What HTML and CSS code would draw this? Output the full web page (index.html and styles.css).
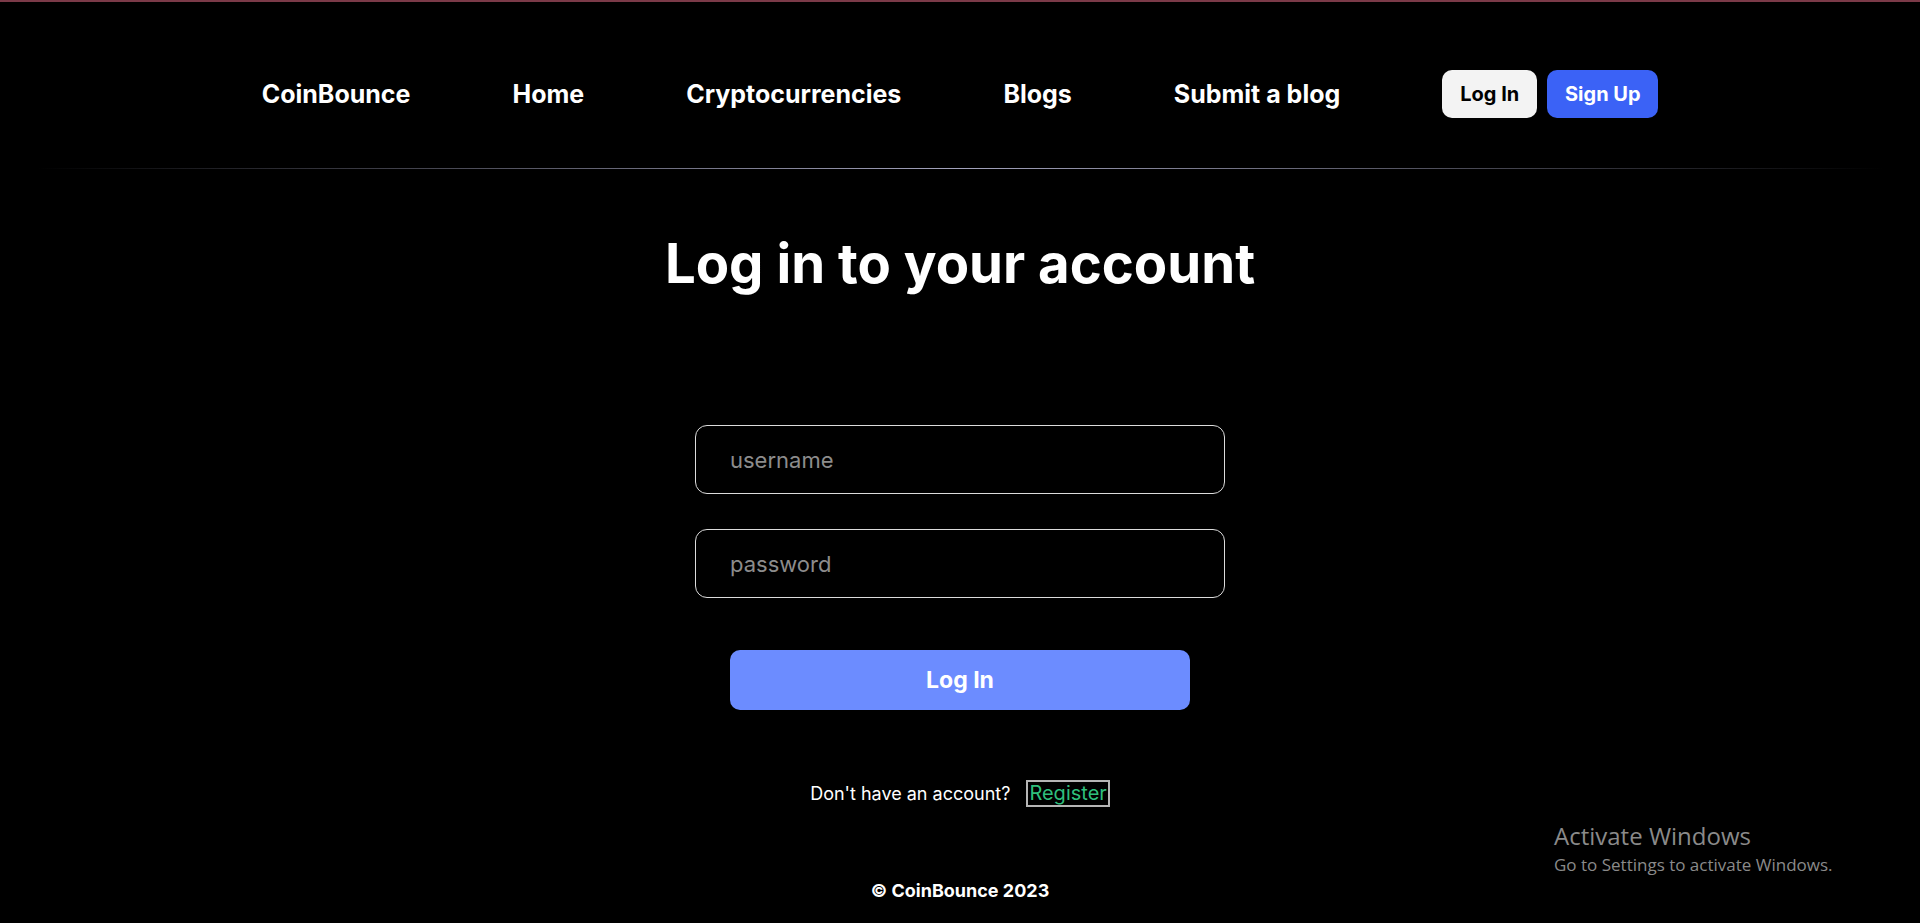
FILE: index.html
```html
<!DOCTYPE html>
<html lang="en">
<head>
<meta charset="utf-8">
<title>CoinBounce</title>
<link rel="stylesheet" href="styles.css">
</head>
<body>
<div class="topbar"></div>
<header class="header">
  <nav class="nav">
    <a class="nav-link" href="#">CoinBounce</a>
    <a class="nav-link" href="#">Home</a>
    <a class="nav-link" href="#">Cryptocurrencies</a>
    <a class="nav-link" href="#">Blogs</a>
    <a class="nav-link" href="#">Submit a blog</a>
    <div class="auth">
      <button class="btn btn-login">Log In</button>
      <button class="btn btn-signup">Sign Up</button>
    </div>
  </nav>
</header>
<div class="separator"></div>
<main class="main">
  <h1 class="title">Log in to your account</h1>
  <form class="form">
    <input class="field" type="text" placeholder="username">
    <input class="field" type="password" placeholder="password">
    <button class="submit" type="button">Log In</button>
  </form>
  <div class="register-row">
    <span>Don't have an account?</span>
    <button class="register" type="button">Register</button>
  </div>
</main>
<footer class="footer">© CoinBounce 2023</footer>
<div class="watermark">
  <div class="wm-title">Activate Windows</div>
  <div class="wm-sub">Go to Settings to activate Windows.</div>
</div>
</body>
</html>
```
FILE: styles.css
```css
html, body {
  margin: 0;
  padding: 0;
  background: #000;
  color: #fff;
  font-family: Inter, "Liberation Sans", sans-serif;
}
body { height: 923px; overflow: hidden; position: relative; }
.topbar { height: 2px; background: #7b3a48; }
.header { padding: 68px 0 50px; }
.nav {
  display: flex;
  justify-content: center;
  align-items: center;
  gap: 102px;
  height: 48px;
}
.nav-link {
  color: #fff;
  text-decoration: none;
  font-size: 25px;
  font-weight: 700;
}
.auth { display: flex; gap: 10px; }
.btn {
  height: 48px;
  border: none;
  border-radius: 10px;
  font-family: Inter, sans-serif;
  font-size: 20px;
  font-weight: 700;
  cursor: pointer;
}
.btn-login { width: 95px; background: #f3f3f3; color: #000; }
.btn-signup { width: 111px; background: #3b62f6; color: #fff; }
.separator {
  height: 1px;
  margin: 0 36px;
  background: linear-gradient(to right, rgba(160,160,190,0), #a3a3bd 50%, rgba(160,160,190,0));
}
.main { display: flex; flex-direction: column; align-items: center; }
.title {
  margin: 61px 0 0;
  font-size: 54.5px;
  line-height: 67px;
  font-weight: 700;
}
.form {
  margin-top: 128px;
  display: flex;
  flex-direction: column;
  align-items: center;
}
.field {
  box-sizing: border-box;
  width: 530px;
  height: 69px;
  margin-bottom: 35px;
  padding: 0 34px;
  background: #000;
  border: 1px solid #dcdcdc;
  border-radius: 12px;
  color: #fff;
  font-family: Inter, sans-serif;
  font-size: 22px;
  outline: none;
}
.field:last-of-type { margin-bottom: 0; }
.field::placeholder { color: #8c8c8c; }
.submit {
  margin-top: 52px;
  width: 460px;
  height: 60px;
  border: none;
  border-radius: 10px;
  background: #6c8cff;
  color: #fff;
  font-family: Inter, sans-serif;
  font-size: 23px;
  font-weight: 700;
}
.register-row {
  margin-top: 70px;
  display: flex;
  align-items: center;
  gap: 16px;
  font-size: 18px;
  height: 27px;
}
.register {
  box-sizing: border-box;
  height: 27px;
  padding: 0 1px;
  background: #000;
  border: 2px solid #b5b5b5;
  color: #2fbf7c;
  font-family: Inter, sans-serif;
  font-size: 20px;
  line-height: 23px;
}
.footer {
  margin-top: 72px;
  text-align: center;
  font-size: 18px;
  font-weight: 700;
  line-height: 24px;
}
.watermark {
  position: absolute;
  left: 1554px;
  top: 821px;
  color: #8a8a8a;
  font-family: "Open Sans", "Noto Sans", sans-serif;
}
.wm-title { font-size: 24px; line-height: 30px; }
.wm-sub { font-size: 17px; line-height: 24px; margin-top: 2px; }
```
